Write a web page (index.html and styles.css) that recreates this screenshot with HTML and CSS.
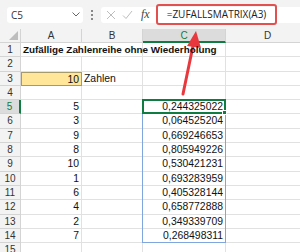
FILE: index.html
```html
<!DOCTYPE html>
<html lang="de">
<head>
    <meta charset="UTF-8">
    <title>ZUFALLSMATRIX</title>
    <link rel="stylesheet" href="styles.css">
</head>
<body>
    <div class="app">
        <div class="toolbar">
            <div class="namebox">
                <span>C5</span>
                <svg class="chevron" width="8" height="5" viewBox="0 0 8 5"><path d="M0.5 0.5 L4 4 L7.5 0.5" fill="none" stroke="#666" stroke-width="1"/></svg>
            </div>
            <div class="dots"><i></i><i></i><i></i></div>
            <div class="formula-bar">
                <svg class="tool-icon" width="10" height="10" viewBox="0 0 10 10"><path d="M1 1 L9 9 M9 1 L1 9" stroke="#bdbdbd" stroke-width="1"/></svg>
                <svg class="tool-icon" width="11" height="10" viewBox="0 0 11 10"><path d="M1 5.5 L4 8.5 L10 1" fill="none" stroke="#bdbdbd" stroke-width="1"/></svg>
                <span class="fx">fx</span>
                <div class="formula">=ZUFALLSMATRIX(A3)</div>
            </div>
        </div>

        <div class="sheet">
            <div class="corner"><svg width="9" height="9" viewBox="0 0 9 9"><path d="M9 0 L9 9 L0 9 Z" fill="#bdbdbd"/></svg></div>
            <div class="col-head">A</div>
            <div class="col-head">B</div>
            <div class="col-head selected">C</div>
            <div class="col-head">D</div>

            <div class="row-head">1</div>
            <div class="cell title">Zufällige Zahlenreihe ohne Wiederholung</div>
            <div class="cell"></div>
            <div class="cell"></div>
            <div class="cell"></div>

            <div class="row-head">2</div>
            <div class="cell"></div><div class="cell"></div><div class="cell"></div><div class="cell"></div>

            <div class="row-head">3</div>
            <div class="cell num input">10</div>
            <div class="cell">Zahlen</div>
            <div class="cell"></div>
            <div class="cell"></div>

            <div class="row-head">4</div>
            <div class="cell"></div><div class="cell"></div><div class="cell"></div><div class="cell"></div>

            <div class="row-head selected">5</div>
            <div class="cell num">5</div><div class="cell"></div>
            <div class="cell num active">0,244325022<div class="spill"></div><div class="active-cell"><i class="handle"></i></div></div>
            <div class="cell"></div>
            <div class="row-head">6</div>
            <div class="cell num">3</div><div class="cell"></div><div class="cell num">0,064525204</div><div class="cell"></div>
            <div class="row-head">7</div>
            <div class="cell num">9</div><div class="cell"></div><div class="cell num">0,669246653</div><div class="cell"></div>
            <div class="row-head">8</div>
            <div class="cell num">8</div><div class="cell"></div><div class="cell num">0,805949226</div><div class="cell"></div>
            <div class="row-head">9</div>
            <div class="cell num">10</div><div class="cell"></div><div class="cell num">0,530421231</div><div class="cell"></div>
            <div class="row-head">10</div>
            <div class="cell num">1</div><div class="cell"></div><div class="cell num">0,693283959</div><div class="cell"></div>
            <div class="row-head">11</div>
            <div class="cell num">6</div><div class="cell"></div><div class="cell num">0,405328144</div><div class="cell"></div>
            <div class="row-head">12</div>
            <div class="cell num">4</div><div class="cell"></div><div class="cell num">0,658772888</div><div class="cell"></div>
            <div class="row-head">13</div>
            <div class="cell num">2</div><div class="cell"></div><div class="cell num">0,349339709</div><div class="cell"></div>
            <div class="row-head">14</div>
            <div class="cell num">7</div><div class="cell"></div><div class="cell num">0,268498311</div><div class="cell"></div>
            <div class="row-head">15</div>
            <div class="cell"></div><div class="cell"></div><div class="cell"></div><div class="cell"></div>
        </div>

        <svg class="arrow" width="300" height="252" viewBox="0 0 300 252">
            <line x1="183" y1="94" x2="193" y2="46" stroke="#e8383d" stroke-width="3" stroke-linecap="round"/>
            <path d="M196 31 L201 48 L187 46 Z" fill="#e8383d"/>
        </svg>
    </div>
</body>
</html>
```

FILE: styles.css
```css
* {
    margin: 0;
    padding: 0;
    box-sizing: border-box;
}
body {
    font-family: 'Liberation Sans', Arial, sans-serif;
    background: white;
    width: 300px;
    height: 252px;
    overflow: hidden;
}
.app {
    position: relative;
    width: 300px;
    height: 252px;
    overflow: hidden;
}
.toolbar {
    height: 29px;
    background: #f3f3f3;
    display: flex;
    align-items: center;
    padding-left: 7px;
    gap: 6px;
}
.namebox {
    width: 76px;
    height: 16px;
    background: white;
    border-radius: 3px;
    display: flex;
    align-items: center;
    justify-content: space-between;
    padding: 0 3px 0 4px;
    font-family: 'Open Sans', sans-serif;
    font-size: 10px;
    color: #333;
}
.dots {
    display: flex;
    flex-direction: column;
    gap: 2px;
    padding: 0 2px;
}
.dots i {
    width: 2px;
    height: 2px;
    background: #666;
    border-radius: 1px;
}
.formula-bar {
    flex: 1;
    height: 16px;
    background: white;
    border-radius: 3px 0 0 3px;
    display: flex;
    align-items: center;
    padding-left: 5px;
    gap: 6px;
}
.tool-icon {
    display: block;
}
.fx {
    font-family: 'Liberation Serif', serif;
    font-style: italic;
    font-size: 12px;
    color: #444;
    margin-left: 2px;
}
.formula {
    padding: 0 9px 0 9px;
    height: 21px;
    line-height: 17px;
    border: 2px solid #e25050;
    border-radius: 3px;
    font-family: 'Open Sans', sans-serif;
    font-size: 10px;
    color: #222;
}
.sheet {
    display: grid;
    grid-template-columns: 21px 61px 61px 83px 84px;
    grid-template-rows: 14px repeat(15, 14.3px);
    font-size: 10.4px;
    color: #111;
}
.corner {
    background: #f3f3f3;
    border-right: 1px solid #d4d4d4;
    border-bottom: 1px solid #d4d4d4;
    display: flex;
    align-items: flex-end;
    justify-content: flex-end;
    padding: 0 2px 2px 0;
}
.corner svg {
    display: block;
}
.col-head,
.row-head {
    background: #f3f3f3;
    border-right: 1px solid #d4d4d4;
    border-bottom: 1px solid #d4d4d4;
    text-align: center;
    line-height: 13px;
    font-size: 10px;
    color: #333;
}
.col-head.selected {
    background: #dcdcdc;
    color: #107c41;
    border-bottom: 2px solid #107c41;
}
.row-head.selected {
    background: #dcdcdc;
    color: #107c41;
    border-right: 2px solid #107c41;
}
.cell {
    border-right: 1px solid #e1e1e1;
    border-bottom: 1px solid #e1e1e1;
    line-height: 13px;
    padding: 0 2px;
    white-space: nowrap;
}
.cell.num {
    text-align: right;
}
.cell.title {
    font-weight: bold;
    font-size: 9.9px;
    border-right: none;
    position: relative;
    z-index: 1;
}
.cell.input {
    background: #ffe699;
    border: 1px solid #a59a6c;
}
.cell.active {
    position: relative;
}
.spill {
    position: absolute;
    left: -1px;
    top: -1px;
    width: 84px;
    height: 144px;
    border: 1px solid #7fa6df;
    pointer-events: none;
}
.active-cell {
    position: absolute;
    left: -1px;
    top: -1px;
    width: 84px;
    height: 15.3px;
    border: 2px solid #107c41;
    pointer-events: none;
}
.handle {
    position: absolute;
    right: -3px;
    bottom: -3px;
    width: 5px;
    height: 5px;
    background: #107c41;
    border: 1px solid white;
}
.arrow {
    position: absolute;
    left: 0;
    top: 0;
    pointer-events: none;
}
```
